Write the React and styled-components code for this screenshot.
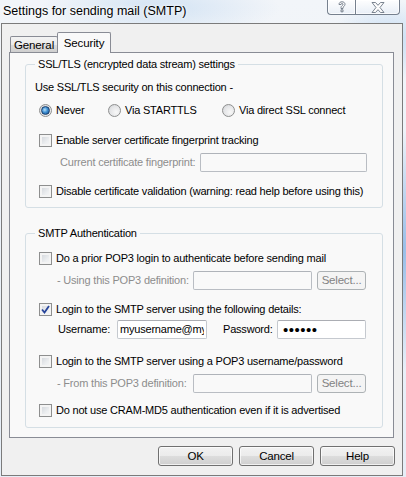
import React from 'react'
import styled, { createGlobalStyle } from 'styled-components'

const GlobalStyle = createGlobalStyle`
  * { box-sizing: border-box; }
  body { margin: 0; }
`

const Win = styled.div`
  width: 406px;
  height: 477px;
  overflow: hidden;
  background:
    radial-gradient(ellipse 40px 120px at 402px 250px, rgba(120, 170, 225, 0.75), transparent),
    radial-gradient(ellipse 120px 30px at 160px 8px, rgba(190, 215, 240, 0.6), transparent),
    radial-gradient(ellipse 60px 40px at 390px 40px, rgba(170, 205, 240, 0.6), transparent),
    linear-gradient(180deg, #f2f5f9 0%, #e6eef7 100%);
  font-family: "Liberation Sans", Arial, sans-serif;
  font-size: 11px;
  letter-spacing: -0.2px;
  color: #000;
`

const TitleBar = styled.div`
  height: 23px;
  display: flex;
  justify-content: space-between;
  align-items: flex-start;
  padding-left: 3px;
`

const Title = styled.div`
  margin-top: 3px;
  font-size: 12.5px;
  letter-spacing: 0;
  line-height: 16px;
  text-shadow: 0 0 6px #fff, 0 0 3px #fff;
`

const CaptionGroup = styled.div`
  display: flex;
  margin-right: 6px;
`

const CaptionButton = styled.div`
  width: ${({ $w }) => $w}px;
  height: 15px;
  display: flex;
  align-items: center;
  justify-content: center;
  border: 1px solid #76808e;
  border-top: none;
  background: linear-gradient(180deg, rgba(255, 255, 255, 0.9), rgba(232, 238, 246, 0.85));
  box-shadow: inset 0 0 0 1px rgba(255, 255, 255, 0.7);
  &:first-child { border-bottom-left-radius: 4px; border-right: none; }
  &:last-child { border-bottom-right-radius: 4px; }
`

const Client = styled.div`
  margin-left: 1px;
  width: 402px;
  height: 453px;
  border: 1px solid #7b7b7b;
  background: #f0f0f0;
  padding: 9px 8px 0 7px;
  display: flex;
  flex-direction: column;
`

const TabStrip = styled.div`
  display: flex;
  align-items: flex-end;
  height: 19px;
  padding-left: 1px;
`

const Tab = styled.div`
  position: relative;
  height: ${({ $active }) => ($active ? 21 : 16)}px;
  width: ${({ $w }) => $w}px;
  margin-left: ${({ $active }) => ($active ? -1 : 0)}px;
  margin-bottom: ${({ $active }) => ($active ? -1 : 0)}px;
  z-index: ${({ $active }) => ($active ? 1 : 0)};
  border: 1px solid #898c95;
  border-bottom: none;
  border-radius: 2px 2px 0 0;
  background: ${({ $active }) =>
    $active ? '#f9f9f9' : 'linear-gradient(180deg, #f3f3f3 0%, #ebebeb 50%, #dddddd 51%, #cfcfcf 100%)'};
  font-size: 11.5px;
  letter-spacing: -0.1px;
  display: flex;
  justify-content: center;
  padding-top: ${({ $active }) => ($active ? 3 : 1)}px;
  line-height: 14px;
`

const Panel = styled.div`
  height: 386px;
  border: 1px solid #898c95;
  background: #f9f9f9;
  padding: 11px 10px 0 15px;
`

const Group = styled.div`
  border: 1px solid #d5dfe5;
  border-radius: 3px;
  padding: 0 0 ${({ $pb }) => $pb}px 0;
  margin-top: ${({ $mt }) => $mt || 0}px;
`

const Legend = styled.div`
  display: table;
  margin: -7px 0 0 9px;
  padding: 0 3px;
  height: 13px;
  line-height: 13px;
  background: #f9f9f9;
`

const Row = styled.div`
  display: flex;
  align-items: center;
  height: 20px;
  margin-top: ${({ $mt }) => $mt || 0}px;
  padding-left: ${({ $indent }) => $indent}px;
  white-space: nowrap;
`

const Label = styled.span`
  color: ${({ $disabled }) => ($disabled ? '#8d8d8d' : '#000')};
  width: ${({ $w }) => ($w ? `${$w}px` : 'auto')};
  padding-left: ${({ $pl }) => $pl || 0}px;
  flex: none;
`

const Option = styled.div`
  display: flex;
  align-items: center;
  gap: 4px;
  width: ${({ $w }) => ($w ? `${$w}px` : 'auto')};
`

const Box = styled.span`
  width: 13px;
  height: 13px;
  flex: none;
  border: 1px solid #8e8f8f;
  background: linear-gradient(135deg, #cdd1d7 0%, #eceef0 60%, #f8f8f8 100%);
  box-shadow: inset 0 0 0 2px #f4f4f4;
  display: flex;
  align-items: center;
  justify-content: center;
`

const Radio = styled.span`
  width: 13px;
  height: 13px;
  flex: none;
  border-radius: 50%;
  border: 1px solid #8e8f8f;
  background: radial-gradient(circle at 65% 65%, #f8f8f8 0%, #e3e4e6 60%, #c9cbcf 100%);
  display: flex;
  align-items: center;
  justify-content: center;
  &::after {
    content: '';
    display: ${({ $on }) => ($on ? 'block' : 'none')};
    width: 7px;
    height: 7px;
    border-radius: 50%;
    border: 1px solid #1b3e6b;
    background: radial-gradient(circle at 40% 40%, #b6e1fb 0%, #3f8fd2 45%, #0f4c8c 100%);
  }
`

const TextBox = styled.input`
  width: ${({ $w }) => $w}px;
  height: 19px;
  flex: none;
  margin: 0;
  border: 1px solid ${({ disabled }) => (disabled ? '#b9bdc3' : '#c5c9cf')};
  border-top-color: ${({ disabled }) => (disabled ? '#afb3b9' : '#abadb3')};
  border-radius: 2px;
  background: ${({ disabled }) => (disabled ? 'transparent' : '#fff')};
  padding: 0 ${({ type }) => (type === 'password' ? 5 : 2)}px;
  font-family: inherit;
  font-size: ${({ type }) => (type === 'password' ? 15 : 11)}px;
  letter-spacing: ${({ type }) => (type === 'password' ? '0.5px' : '-0.2px')};
  color: #000;
  outline: none;
`

const SmallButton = styled.div`
  width: 49px;
  height: 19px;
  margin-left: 5px;
  flex: none;
  border: 1px solid #adb2b5;
  border-radius: 3px;
  background: #f4f4f4;
  color: #838383;
  font-size: 11.5px;
  display: flex;
  align-items: center;
  justify-content: center;
`

const ButtonRow = styled.div`
  display: flex;
  justify-content: flex-end;
  gap: 6px;
  margin-top: 8px;
  margin-right: -1px;
`

const Button = styled.div`
  width: 75px;
  height: 20px;
  border: 1px solid #707070;
  border-radius: 3px;
  background: linear-gradient(180deg, #f2f2f2 0%, #ebebeb 50%, #dddddd 51%, #cfcfcf 100%);
  box-shadow: inset 0 0 0 1px rgba(255, 255, 255, 0.7);
  font-size: 11.5px;
  display: flex;
  align-items: center;
  justify-content: center;
`

const Check = ({ checked }) => (
  <Box>
    {checked && (
      <svg width="9" height="9" viewBox="0 0 9 9">
        <path d="M1 4.5 L3.5 7.5 L8 1" fill="none" stroke="#27449a" strokeWidth="1.8" />
      </svg>
    )}
  </Box>
)

const CheckRow = ({ checked, children, mt }) => (
  <Row $mt={mt} $indent={13}>
    <Option>
      <Check checked={checked} />
      <span>{children}</span>
    </Option>
  </Row>
)

const HelpGlyph = () => (
  <svg width="10" height="12" viewBox="0 0 10 12">
    <path
      d="M2 3.5 C2 1.5 3.5 0.8 5 0.8 C6.8 0.8 8 1.8 8 3.3 C8 5 6 5.3 6 7 L6 7.5 L4 7.5 L4 6.6 C4 4.8 6 4.5 6 3.4 C6 2.8 5.6 2.5 5 2.5 C4.3 2.5 4 2.9 4 3.5 Z M4 8.8 L6 8.8 L6 10.8 L4 10.8 Z"
      fill="#fdfdfd"
      stroke="#6d7785"
      strokeWidth="0.9"
    />
  </svg>
)

const CloseGlyph = () => (
  <svg width="14" height="11" viewBox="0 0 14 11">
    <path
      d="M1 0.5 L4.5 0.5 L7 3.3 L9.5 0.5 L13 0.5 L9 5.5 L13 10.5 L9.5 10.5 L7 7.7 L4.5 10.5 L1 10.5 L5 5.5 Z"
      fill="#fdfdfd"
      stroke="#6d7785"
      strokeWidth="0.9"
    />
  </svg>
)

export default function App() {
  return (
    <Win>
      <GlobalStyle />
      <TitleBar>
        <Title>Settings for sending mail (SMTP)</Title>
        <CaptionGroup>
          <CaptionButton $w={28}>
            <HelpGlyph />
          </CaptionButton>
          <CaptionButton $w={45}>
            <CloseGlyph />
          </CaptionButton>
        </CaptionGroup>
      </TitleBar>
      <Client>
        <TabStrip>
          <Tab $w={48}>General</Tab>
          <Tab $w={54} $active>
            Security
          </Tab>
        </TabStrip>
        <Panel>
          <Group $pb={6}>
            <Legend>SSL/TLS (encrypted data stream) settings</Legend>
            <Row $mt={6} $indent={9}>
              Use SSL/TLS security on this connection -
            </Row>
            <Row $mt={3} $indent={13}>
              <Option $w={69}>
                <Radio $on />
                <span>Never</span>
              </Option>
              <Option $w={114}>
                <Radio />
                <span>Via STARTTLS</span>
              </Option>
              <Option>
                <Radio />
                <span>Via direct SSL connect</span>
              </Option>
            </Row>
            <CheckRow mt={10}>Enable server certificate fingerprint tracking</CheckRow>
            <Row $mt={2} $indent={34}>
              <Label $disabled $w={140}>Current certificate fingerprint:</Label>
              <TextBox $w={167} disabled />
            </Row>
            <CheckRow mt={9}>Disable certificate validation (warning: read help before using this)</CheckRow>
          </Group>

          <Group $pb={7} $mt={25}>
            <Legend>SMTP Authentication</Legend>
            <CheckRow mt={8}>Do a prior POP3 login to authenticate before sending mail</CheckRow>
            <Row $mt={2} $indent={31}>
              <Label $disabled $w={136}>- Using this POP3 definition:</Label>
              <TextBox $w={119} disabled />
              <SmallButton>Select...</SmallButton>
            </Row>
            <CheckRow checked mt={9}>
              Login to the SMTP server using the following details:
            </CheckRow>
            <Row $indent={32}>
              <Label $w={59}>Username:</Label>
              <TextBox $w={90} readOnly defaultValue="myusername@myserver.com" />
              <Label $w={70} $pl={16}>
                Password:
              </Label>
              <TextBox $w={89} type="password" readOnly defaultValue="secret" />
            </Row>
            <CheckRow mt={12}>Login to the SMTP server using a POP3 username/password</CheckRow>
            <Row $mt={2} $indent={31}>
              <Label $disabled $w={136}>- From this POP3 definition:</Label>
              <TextBox $w={119} disabled />
              <SmallButton>Select...</SmallButton>
            </Row>
            <CheckRow mt={7}>Do not use CRAM-MD5 authentication even if it is advertised</CheckRow>
          </Group>
        </Panel>
        <ButtonRow>
          <Button>OK</Button>
          <Button>Cancel</Button>
          <Button>Help</Button>
        </ButtonRow>
      </Client>
    </Win>
  )
}
